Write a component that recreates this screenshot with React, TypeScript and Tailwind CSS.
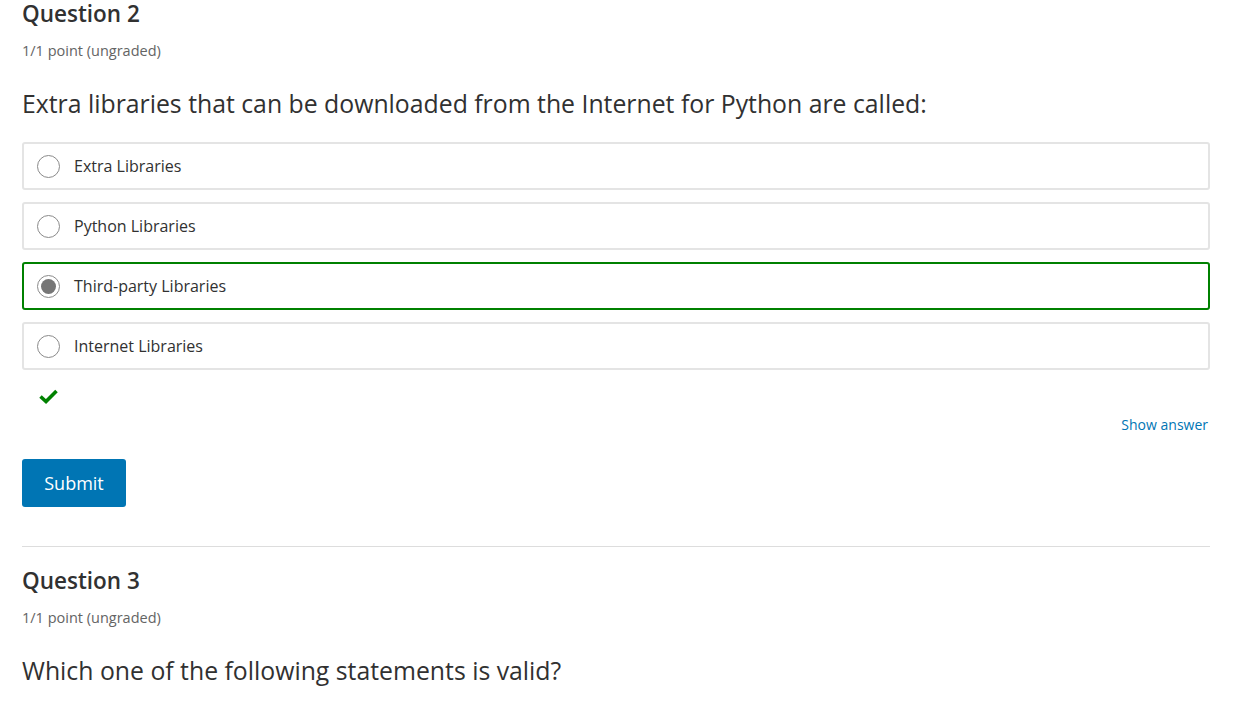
import React from "react";

const options = [
  { label: "Extra Libraries", selected: false },
  { label: "Python Libraries", selected: false },
  { label: "Third-party Libraries", selected: true },
  { label: "Internet Libraries", selected: false },
];

const Radio = ({ checked }: { checked: boolean }) => (
  <span className="w-[23px] h-[23px] rounded-full border border-[#8a8a8a] bg-white flex items-center justify-center shrink-0">
    {checked && <span className="w-[15px] h-[15px] rounded-full bg-[#767676]" />}
  </span>
);

const QuestionHeader = ({ title, prompt }: { title: string; prompt: string }) => (
  <div>
    <h3 className="text-[22.5px] leading-[28px] font-semibold text-[#313131]">{title}</h3>
    <p className="mt-[13px] text-[14.5px] leading-[20px] text-[#646464]">1/1 point (ungraded)</p>
    <p className="mt-[26px] text-[24.8px] leading-[32px] text-[#313131]">{prompt}</p>
  </div>
);

export default function App() {
  return (
    <div
      className="bg-white min-h-screen px-[22px] pr-[31px]"
      style={{ fontFamily: '"Open Sans", sans-serif' }}
    >
      <QuestionHeader
        title="Question 2"
        prompt="Extra libraries that can be downloaded from the Internet for Python are called:"
      />

      <div className="mt-[23px] flex flex-col gap-[12px]">
        {options.map((o) => (
          <label
            key={o.label}
            className={`h-[48px] flex items-center gap-[14px] pl-[13px] rounded-[3px] border-2 ${
              o.selected ? "border-[#008100]" : "border-[#e4e4e4]"
            }`}
          >
            <Radio checked={o.selected} />
            <span className="text-[16px] text-[#313131]">{o.label}</span>
          </label>
        ))}
      </div>

      <div className="mt-[19px] pl-[17px] h-[16px]">
        <svg width="19" height="15" viewBox="0 0 19 15">
          <path d="M1.5 7.5 L7 12.5 L17.5 2" fill="none" stroke="#008100" strokeWidth="3.6" />
        </svg>
      </div>

      <div className="flex justify-end mt-[10px] pr-[2px]">
        <button className="text-[14px] leading-[20px] text-[#0075b4]">Show answer</button>
      </div>

      <button className="mt-[24px] w-[104px] h-[48px] rounded-[3px] bg-[#0075b4] text-white text-[18px]">
        Submit
      </button>

      <hr className="mt-[39px] border-t border-[#dddddd]" />

      <div className="pt-[20px]">
        <QuestionHeader title="Question 3" prompt="Which one of the following statements is valid?" />
      </div>
    </div>
  );
}
